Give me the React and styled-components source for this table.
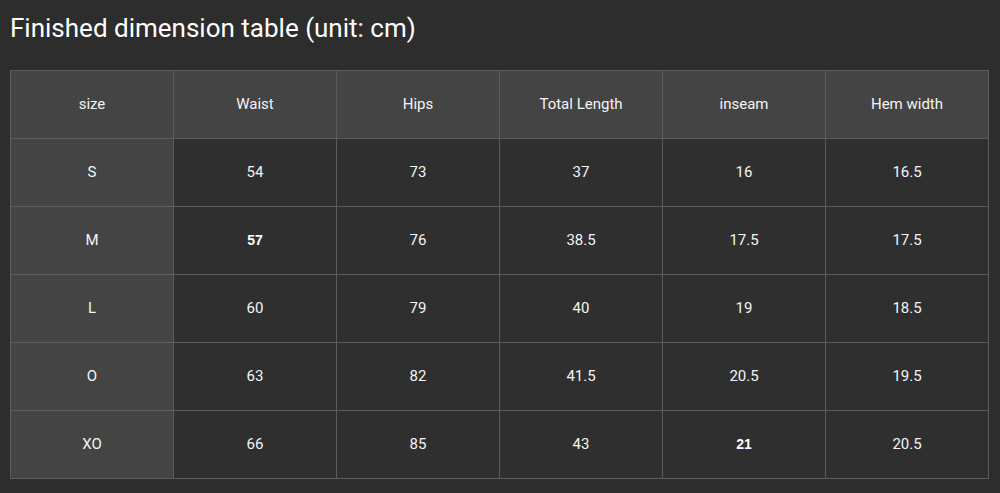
import React from 'react'
import styled, { createGlobalStyle } from 'styled-components'

const GlobalStyle = createGlobalStyle`
  body {
    margin: 0;
    background: #2d2d2d;
    font-family: Roboto, "Liberation Sans", sans-serif;
  }
`

const Page = styled.div`
  padding: 12px 10px 0 10px;
  color: #f2f2f2;
`

const Title = styled.h1`
  margin: 0 0 25px 0;
  font-size: 26px;
  font-weight: 400;
  line-height: 33px;
  color: #ffffff;
`

const Table = styled.table`
  width: 979px;
  border-collapse: collapse;
  table-layout: fixed;
  border: 1px solid #5c5c5c;
`

const Cell = styled.td`
  height: 65px;
  padding: 0 0 2px 0;
  border: 1px solid #5c5c5c;
  text-align: center;
  vertical-align: middle;
  font-size: 15px;
  color: #f4f4f4;
  background: ${(p) => (p.$head ? '#444444' : '#2f2f2f')};
`

const Strong = styled.b`
  font-family: "Liberation Sans", Arial, sans-serif;
  font-size: 14px;
  font-weight: 700;
  color: #ffffff;
`

const headers = ['size', 'Waist', 'Hips', 'Total Length', 'inseam', 'Hem width']

const rows = [
  ['S', '54', '73', '37', '16', '16.5'],
  ['M', '!57', '76', '38.5', '17.5', '17.5'],
  ['L', '60', '79', '40', '19', '18.5'],
  ['O', '63', '82', '41.5', '20.5', '19.5'],
  ['XO', '66', '85', '43', '!21', '20.5'],
]

function renderValue(v) {
  return v.startsWith('!') ? <Strong>{v.slice(1)}</Strong> : v
}

export default function App() {
  return (
    <Page>
      <GlobalStyle />
      <Title>Finished dimension table (unit: cm)</Title>
      <Table>
        <tbody>
          <tr>
            {headers.map((h) => (
              <Cell key={h} $head>{h}</Cell>
            ))}
          </tr>
          {rows.map((row) => (
            <tr key={row[0]}>
              {row.map((v, i) => (
                <Cell key={i} $head={i === 0}>{renderValue(v)}</Cell>
              ))}
            </tr>
          ))}
        </tbody>
      </Table>
    </Page>
  )
}
